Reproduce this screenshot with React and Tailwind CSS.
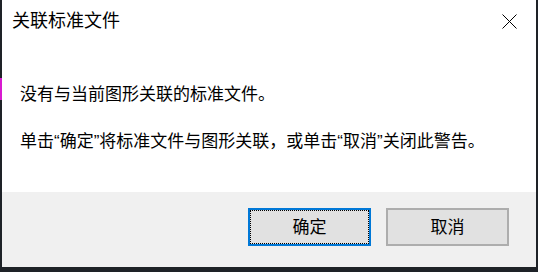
import React from "react";

const font = { fontFamily: '"Liberation Sans", "Noto Sans CJK SC", sans-serif' };

export default function App() {
  return (
    <div className="w-[538px] h-[272px] bg-[#1e2227] flex flex-row pb-[5px]" style={font}>
      <div className="w-[2px] flex flex-col">
        <div className="h-[78px]" />
        <div className="h-[22px] bg-[#d81ad0]" />
      </div>
      <div className="w-[534px] flex flex-col">
        <div className="h-[192px] bg-white flex flex-col">
          <div className="h-[42px] flex items-center justify-between pl-[10px] pr-[19px]">
            <span className="text-[18px] leading-none text-black">关联标准文件</span>
            <svg width="15" height="15" viewBox="0 0 15 15" className="block">
              <path d="M0.5 0.5 L14.5 14.5 M14.5 0.5 L0.5 14.5" stroke="#000" strokeWidth="1" fill="none" />
            </svg>
          </div>
          <div className="pl-[18px] pt-[44px] flex flex-col gap-[30px] text-[17px] leading-[17px] text-black">
            <p>没有与当前图形关联的标准文件。</p>
            <p>单击“确定”将标准文件与图形关联，或单击“取消”关闭此警告。</p>
          </div>
        </div>
        <div className="flex-1 bg-[#f0f0f0] flex justify-end items-start pt-[16px] pr-[27px] gap-[15px]">
          <button className="w-[123px] h-[38px] bg-[#e1e1e1] border-2 border-[#0078d7] flex">
            <span className="flex-1 border border-dotted border-black flex items-center justify-center text-[17px] leading-none text-black">
              确定
            </span>
          </button>
          <button className="w-[123px] h-[38px] bg-[#e1e1e1] border-2 border-[#adadad] flex items-center justify-center text-[17px] leading-none text-black">
            取消
          </button>
        </div>
      </div>
    </div>
  );
}
